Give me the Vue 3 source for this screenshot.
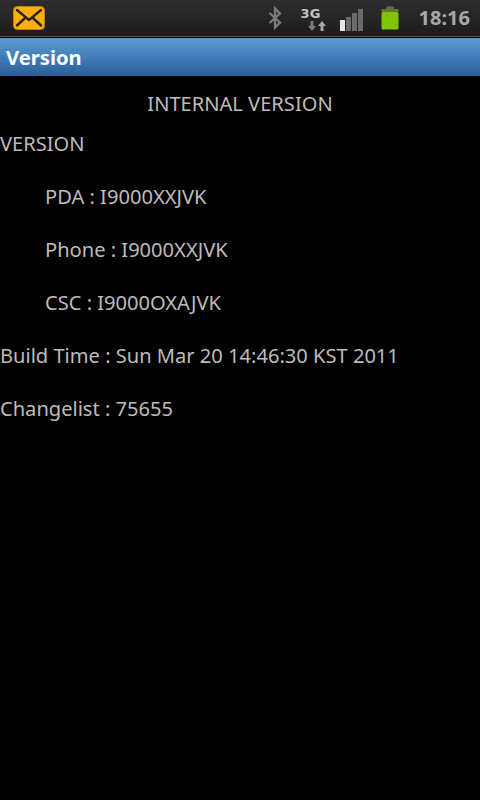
<script setup>
const indented = ['PDA : I9000XXJVK', 'Phone : I9000XXJVK', 'CSC : I9000OXAJVK']
</script>

<template>
  <div class="screen">
    <!-- status bar -->
    <div class="status-bar">
      <svg class="mail" width="32" height="24" viewBox="0 0 32 24">
        <rect x="0.5" y="0.5" width="31" height="23" rx="4" fill="#fdae0e" stroke="#c67f00" />
        <path d="M4 4 L16 14 L28 4 M4 19.500 L11.500 12.500 M28 19.500 L20.500 12.500" fill="none" stroke="#2a2418" stroke-width="2.400" stroke-linecap="round" stroke-linejoin="round" />
      </svg>
      <div class="status-right">
        <svg class="bt" width="14" height="24" viewBox="0 0 14 24">
          <path d="M1.500 7 L12 16.500 L7 21.500 V2.500 L12 7.500 L1.500 17" fill="none" stroke="#7d7d7d" stroke-width="2.200" />
        </svg>
        <div class="net">
          <span class="net-label">3G</span>
          <svg class="arrows" width="18" height="10" viewBox="0 0 18 10">
            <path d="M2.500 0 H5.500 V5 H8 L4 10 L0 5 H2.500 Z" fill="#7a7a7a" />
            <path d="M12.500 10 H15.500 V5 H18 L14 0 L10 5 H12.500 Z" fill="#a8a8a8" />
          </svg>
        </div>
        <svg class="signal" width="24" height="22" viewBox="0 0 24 22">
          <rect x="0" y="11" width="5" height="11" fill="#e6e6e6" />
          <rect x="6" y="8" width="5" height="14" fill="#6a6a6a" />
          <rect x="12" y="4" width="5" height="18" fill="#6a6a6a" />
          <rect x="18" y="0" width="5" height="22" fill="#6a6a6a" />
        </svg>
        <svg class="battery" width="18" height="24" viewBox="0 0 18 24">
          <path d="M5 2 Q5 0.500 6.500 0.500 H11.500 Q13 0.500 13 2 V3 H5 Z" fill="#666" />
          <rect x="0.500" y="3" width="17" height="3" fill="#5c7a20" />
          <rect x="0.500" y="6" width="17" height="17.500" rx="1.500" fill="#83c400" />
        </svg>
        <span class="clock">18:16</span>
      </div>
    </div>

    <!-- title bar -->
    <div class="title-bar">Version</div>

    <div class="content">
      <div class="heading">INTERNAL VERSION</div>
      <div class="line first">VERSION</div>
      <div v-for="item in indented" :key="item" class="line sub">{{ item }}</div>
      <div class="line">Build Time : Sun Mar 20 14:46:30 KST 2011</div>
      <div class="line">Changelist : 75655</div>
    </div>
  </div>
</template>

<style>
html, body {
  margin: 0;
  background: #000;
}
</style>

<style scoped>
.screen {
  width: 480px;
  height: 800px;
  background: #000;
  font-family: "Noto Sans", "Open Sans", sans-serif;
  overflow: hidden;
}

.status-bar {
  height: 36px;
  padding: 0 10px 0 13px;
  display: flex;
  align-items: center;
  justify-content: space-between;
  background: linear-gradient(#2e2e2e, #1b1b1b);
  border-bottom: 1px solid #555;
  box-shadow: 0 1px 0 #000;
  margin-bottom: 1px;
}

.status-right {
  display: flex;
  align-items: center;
}

.bt {
  margin-right: 19px;
  margin-left: -2px;
}

.net {
  width: 26px;
  margin-right: 13px;
  display: flex;
  flex-direction: column;
  line-height: 1;
  margin-top: 3px;
}

.net-label {
  font-family: "DejaVu Sans", sans-serif;
  font-size: 13px;
  font-weight: 700;
  color: #c4c4c4;
  height: 12px;
  line-height: 12px;
}

.arrows {
  margin-left: 7px;
  margin-top: 1px;
}

.signal {
  margin-right: 17px;
  margin-top: 4px;
}

.battery {
  margin-right: 20px;
}

.clock {
  font-size: 20px;
  font-weight: 700;
  color: #a8a8a8;
  line-height: 1;
}

.title-bar {
  height: 38px;
  padding-left: 6px;
  display: flex;
  align-items: center;
  background: linear-gradient(#5b9bd5, #2a5f99);
  color: #fff;
  font-size: 20.200px;
  font-weight: 700;
  box-sizing: border-box;
}

.content {
  color: #bcbcbc;
  font-size: 20.100px;
  line-height: 27px;
}

.heading {
  text-align: center;
  margin-top: 14px;
}

.line {
  margin-top: 26px;
}

.line.first {
  margin-top: 13px;
}

.sub {
  padding-left: 45px;
}
</style>
